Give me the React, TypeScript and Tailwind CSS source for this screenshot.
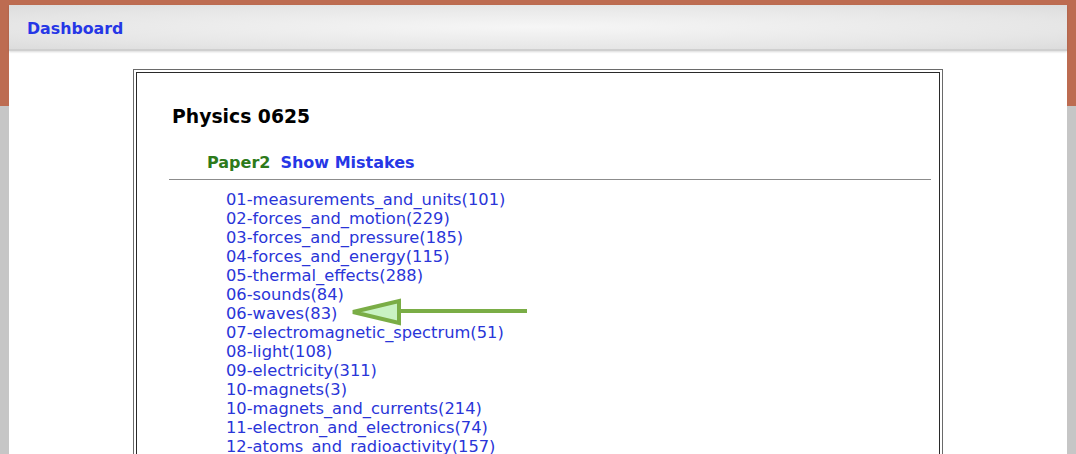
import React from 'react';

const topics = [
  '01-measurements_and_units(101)',
  '02-forces_and_motion(229)',
  '03-forces_and_pressure(185)',
  '04-forces_and_energy(115)',
  '05-thermal_effects(288)',
  '06-sounds(84)',
  '06-waves(83)',
  '07-electromagnetic_spectrum(51)',
  '08-light(108)',
  '09-electricity(311)',
  '10-magnets(3)',
  '10-magnets_and_currents(214)',
  '11-electron_and_electronics(74)',
  '12-atoms_and_radioactivity(157)',
];

const Arrow = () => (
  <svg width="184" height="28" viewBox="0 0 184 28" className="absolute left-[123px] top-[-6px]">
    <line x1="50" y1="13" x2="178" y2="13" stroke="#7aad46" strokeWidth="4" />
    <polygon points="4,14 50,3 50,25" fill="#c9f2c3" stroke="#7aad46" strokeWidth="4" strokeLinejoin="miter" />
  </svg>
);

const App = () => {
  return (
    <div
      className="w-[1076px] h-[454px] overflow-hidden bg-[linear-gradient(to_bottom,#bd6c51_106px,#c6c6c6_106px)] pt-[5px] px-[9px]"
      style={{ fontFamily: '"DejaVu Sans", Verdana, sans-serif' }}
    >
      <div className="bg-white h-full">
        {/* Header */}
        <div className="h-[46px] flex items-center pl-[18px] pt-[3px] bg-[radial-gradient(ellipse_at_center,#f6f6f6_0%,#e6e6e6_70%,#dcdcdc_100%)] border-b-2 border-[#cfcfcf] shadow-[0_1px_2px_rgba(0,0,0,0.15)]">
          <a href="#" className="text-[#2637e6] font-bold text-[15.8px]">Dashboard</a>
        </div>

        {/* Main box */}
        <div className="mx-auto mt-[18px] w-[810px] border border-[#6a6a6a] p-[2px]">
          <div className="border border-[#2a2a2a] h-[400px] pt-[32px]">
            <h1 className="pl-[35px] text-[18.8px] font-bold text-black leading-[24px]">Physics 0625</h1>
            <div className="mt-[24px] pl-[70px] flex gap-[10px] text-[16px] font-bold leading-[20px]">
              <span className="text-[#2d7a1a]">Paper2</span>
              <a href="#" className="text-[#2637e6]">Show Mistakes</a>
            </div>
            <div className="mt-[6px] ml-[32px] mr-[8px] h-px bg-[#8c8c8c]" />
            <ul className="mt-[10px] pl-[89px] text-[16.3px] leading-[19px]">
              {topics.map((t) => (
                <li key={t} className="relative">
                  <a href="#" className="text-[#2a35d8]">{t}</a>
                  {t === '06-waves(83)' && <Arrow />}
                </li>
              ))}
            </ul>
          </div>
        </div>
      </div>
    </div>
  );
};

export default App;
